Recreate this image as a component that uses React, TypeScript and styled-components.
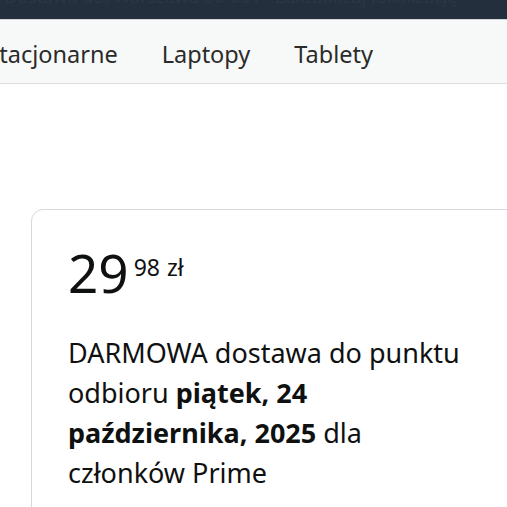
import React from "react";
import styled, { createGlobalStyle } from "styled-components";

const GlobalStyle = createGlobalStyle`
  html, body {
    margin: 0;
    padding: 0;
    background: #ffffff;
    font-family: "Noto Sans", "Open Sans", Arial, sans-serif;
    color: #0f1111;
  }
`;

const navItems = ["stacjonarne", "Laptopy", "Tablety"];

const App: React.FC = () => {
  return (
    <Page>
      <GlobalStyle />
      <TopBar>
        <TopBarText>Dostawa do: Warszawa 00-001 · Zaktualizuj lokalizację</TopBarText>
      </TopBar>
      <CategoryNav>
        <CategoryList>
          {navItems.map((item) => (
            <CategoryItem key={item}>{item}</CategoryItem>
          ))}
        </CategoryList>
      </CategoryNav>
      <Content>
        <OfferCard>
          <Price>
            <PriceWhole>29</PriceWhole>
            <PriceFraction>98</PriceFraction>
            <PriceCurrency>zł</PriceCurrency>
          </Price>
          <DeliveryText>
            DARMOWA dostawa do punktu odbioru <strong>piątek, 24 października, 2025</strong> dla
            członków Prime
          </DeliveryText>
        </OfferCard>
      </Content>
    </Page>
  );
};

const Page = styled.div`
  width: 507px;
  height: 507px;
  overflow: hidden;
  background: #ffffff;
`;

const TopBar = styled.div`
  height: 19px;
  background-color: #242f3e;
  overflow: hidden;
  border-bottom: 1px solid #d3d5dd;
`;

const TopBarText = styled.div`
  margin-top: -15px;
  padding-left: 4px;
  font-size: 18px;
  line-height: 22px;
  color: #2b3645;
  white-space: nowrap;
`;

const CategoryNav = styled.nav`
  height: 63px;
  background-color: #f7f8f8;
  border-bottom: 1px solid #dddddd;
  overflow: hidden;
`;

const CategoryList = styled.div`
  display: flex;
  align-items: flex-start;
  padding-top: 19px;
  margin-left: -34px;
`;

const CategoryItem = styled.a`
  padding: 0 22px;
  font-size: 23.5px;
  line-height: 30px;
  color: #2b2b2b;
  white-space: nowrap;
`;

const Content = styled.main`
  padding-top: 125px;
  padding-left: 31px;
`;

const OfferCard = styled.section`
  width: 520px;
  border: 1px solid #d5d9d9;
  border-radius: 12px;
  padding: 33px 0 0 36px;
  min-height: 320px;
`;

const Price = styled.div`
  display: flex;
  align-items: flex-start;
  color: #0f1111;
`;

const PriceWhole = styled.span`
  font-size: 53px;
  line-height: 60px;
`;

const PriceFraction = styled.span`
  margin: 9px 0 0 5px;
  font-size: 23px;
  line-height: 30px;
`;

const PriceCurrency = styled.span`
  margin: 9px 0 0 7px;
  font-size: 23px;
  line-height: 30px;
`;

const DeliveryText = styled.p`
  margin: 30px 0 0;
  width: 398px;
  font-size: 27px;
  line-height: 40px;
  color: #0f1111;

  strong {
    font-weight: 700;
  }
`;

export default App;
